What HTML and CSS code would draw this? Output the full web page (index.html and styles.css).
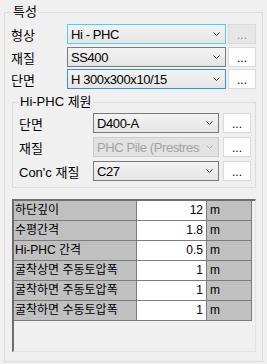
FILE: index.html
```html
<!DOCTYPE html>
<html lang="ko">
<head>
    <meta charset="UTF-8">
    <meta name="viewport" content="width=device-width, initial-scale=1.0">
    <title>특성</title>
    <link rel="stylesheet" href="styles.css">
</head>
<body>
    <!-- 특성 그룹 -->
    <fieldset class="group group-main">
        <legend>특성</legend>

        <div class="row row-main">
            <span class="label">형상</span>
            <div class="combo combo-hover">
                <span class="combo-text">Hi - PHC</span>
                <svg class="arrow" width="7" height="4" viewBox="0 0 7 4"><polyline points="0.5,0.5 3.5,3.5 6.5,0.5"/></svg>
            </div>
            <div class="dots disabled">...</div>
        </div>
        <div class="row row-main">
            <span class="label">재질</span>
            <div class="combo">
                <span class="combo-text">SS400</span>
                <svg class="arrow" width="7" height="4" viewBox="0 0 7 4"><polyline points="0.5,0.5 3.5,3.5 6.5,0.5"/></svg>
            </div>
            <div class="dots">...</div>
        </div>
        <div class="row row-main">
            <span class="label">단면</span>
            <div class="combo combo-focus">
                <span class="combo-text">H 300x300x10/15</span>
                <svg class="arrow" width="7" height="4" viewBox="0 0 7 4"><polyline points="0.5,0.5 3.5,3.5 6.5,0.5"/></svg>
            </div>
            <div class="dots">...</div>
        </div>

        <!-- Hi-PHC 제원 그룹 -->
        <fieldset class="group group-sub">
            <legend>Hi-PHC 제원</legend>
            <div class="row row-sub">
                <span class="label">단면</span>
                <div class="combo">
                    <span class="combo-text">D400-A</span>
                    <svg class="arrow" width="7" height="4" viewBox="0 0 7 4"><polyline points="0.5,0.5 3.5,3.5 6.5,0.5"/></svg>
                </div>
                <div class="dots">...</div>
            </div>
            <div class="row row-sub">
                <span class="label">재질</span>
                <div class="combo combo-disabled">
                    <span class="combo-text">PHC Pile (Prestressed)</span>
                    <svg class="arrow" width="7" height="4" viewBox="0 0 7 4"><polyline points="0.5,0.5 3.5,3.5 6.5,0.5"/></svg>
                </div>
                <div class="dots">...</div>
            </div>
            <div class="row row-sub">
                <span class="label">Con'c 재질</span>
                <div class="combo">
                    <span class="combo-text">C27</span>
                    <svg class="arrow" width="7" height="4" viewBox="0 0 7 4"><polyline points="0.5,0.5 3.5,3.5 6.5,0.5"/></svg>
                </div>
                <div class="dots">...</div>
            </div>
        </fieldset>

        <!-- 입력 그리드 -->
        <div class="grid-panel">
            <table class="grid">
                <tr><td class="cell-name">하단깊이</td><td class="cell-value">12</td><td class="cell-unit">m</td></tr>
                <tr><td class="cell-name">수평간격</td><td class="cell-value">1.8</td><td class="cell-unit">m</td></tr>
                <tr><td class="cell-name">Hi-PHC 간격</td><td class="cell-value">0.5</td><td class="cell-unit">m</td></tr>
                <tr><td class="cell-name">굴착상면 주동토압폭</td><td class="cell-value">1</td><td class="cell-unit">m</td></tr>
                <tr><td class="cell-name">굴착하면 주동토압폭</td><td class="cell-value">1</td><td class="cell-unit">m</td></tr>
                <tr><td class="cell-name">굴착하면 수동토압폭</td><td class="cell-value">1</td><td class="cell-unit">m</td></tr>
            </table>
        </div>
    </fieldset>
</body>
</html>
```

FILE: styles.css
```css
/* Página */
body {
    margin: 0;
    background-color: #f0f0f0;
    font-family: "Liberation Sans", "Noto Sans CJK KR", sans-serif;
    font-size: 13px;
    color: #000;
}

/* Group box */
.group {
    margin: 0;
    border: 1px solid #dcdcdc;
    min-width: 0;
}

.group legend {
    font-size: 13px;
    line-height: 16px;
    height: 16px;
}

.group-main {
    box-sizing: border-box;
    width: 259px;
    margin: 4px 0 0 4px;
    padding: 4px 6px 9px 6px;
}

.group-main > legend {
    padding: 0 2px;
}

.group-sub {
    margin: 5px 0 0 1px;
    padding: 3px 4px 6px 6px;
}

.group-sub > legend {
    padding: 0 1px;
}

/* Filas */
.row {
    display: flex;
    align-items: center;
    height: 20px;
}

.row-main {
    margin-bottom: 2px;
}

.row-main:first-of-type {
    margin-bottom: 3px;
}

.row-main .label {
    width: 56px;
}

.row-main .combo {
    width: 159px;
    margin-right: 2px;
}

.row-sub {
    margin-bottom: 4px;
}

.row-sub:last-of-type {
    margin-bottom: 0;
}

.row-sub .label {
    width: 74px;
}

.row-sub .combo {
    width: 126px;
    margin-right: 4px;
}

.label {
    white-space: nowrap;
}

/* Combo box */
.combo {
    box-sizing: border-box;
    height: 20px;
    display: flex;
    align-items: center;
    padding-left: 3px;
    border: 1px solid #7a7a7a;
    background: linear-gradient(#f3f3f3, #e5e5e5);
}

.combo-hover {
    border-color: #4fcdee;
}

.combo-focus {
    border-color: #3d8fd1;
}

.combo-disabled {
    border-color: #cccccc;
    background: #e2e2e2;
    color: #a2a2a2;
}

.combo-text {
    flex: 1;
    overflow: hidden;
    white-space: nowrap;
    letter-spacing: -0.4px;
}

.arrow {
    flex: none;
    margin: 0 5px 0 6px;
    fill: none;
    stroke: #2b2b2b;
    stroke-width: 1;
}

.combo-disabled .arrow {
    stroke: #a8a8a8;
}

/* Botón ... */
.dots {
    box-sizing: border-box;
    width: 28px;
    height: 20px;
    border: 1px solid #dadada;
    background-color: #fdfdfd;
    font-size: 12px;
    line-height: 20px;
    text-align: center;
    color: #000;
}

.dots.disabled {
    background-color: #e6e6e6;
    color: #8c8c8c;
}

/* Grid */
.grid-panel {
    box-sizing: border-box;
    height: 153px;
    margin: 11px 0 0 1px;
    border-top: 2px solid #6e6e6e;
    border-left: 2px solid #6e6e6e;
    border-right: 1px solid #e3e3e3;
    border-bottom: 1px solid #e3e3e3;
    background-color: #f0f0f0;
}

.grid {
    border-collapse: separate;
    border-spacing: 0;
    width: 238px;
    table-layout: fixed;
    font-size: 12px;
}

.grid td {
    height: 19px;
    padding: 0;
    line-height: 19px;
    border-right: 1px solid #7c7c7c;
    border-bottom: 1px solid #7c7c7c;
    white-space: nowrap;
    overflow: hidden;
}

.cell-name {
    width: 121px;
    padding-left: 1px !important;
    background-color: #c0c0c0;
}

.cell-value {
    width: 66px;
    padding-right: 3px !important;
    text-align: right;
    background-color: #fff;
}

.cell-unit {
    width: 41px;
    padding-left: 3px !important;
    background-color: #c0c0c0;
}
```
